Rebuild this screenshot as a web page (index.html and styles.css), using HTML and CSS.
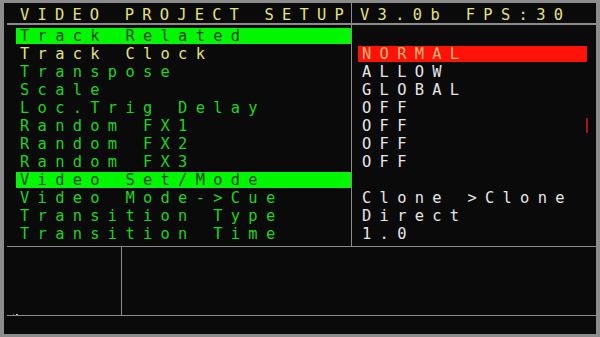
FILE: index.html
```html
<html>
<head>
	<meta charset="utf-8" />
	<title>video project setup</title>
	<link rel="stylesheet" href="styles.css">
</head>

<body>
	<div id="frame">
		<div id="screen">
			<div class="top">
				<div class="pane left">
					<div class="title">VIDEO PROJECT SETUP</div>
					<div class="list">
						<div class="row section">Track Related</div>
						<div class="row current">Track Clock</div>
						<div class="row">Transpose</div>
						<div class="row">Scale</div>
						<div class="row">Loc.Trig Delay</div>
						<div class="row">Random FX1</div>
						<div class="row">Random FX2</div>
						<div class="row">Random FX3</div>
						<div class="row section">Video Set/Mode</div>
						<div class="row">Video Mode-&gt;Cue</div>
						<div class="row">Transition Type</div>
						<div class="row">Transition Time</div>
					</div>
				</div>
				<div class="pane right">
					<div class="title">V3.0b FPS:30</div>
					<div class="list values">
						<div class="row"></div>
						<div class="row selected">NORMAL</div>
						<div class="row">ALLOW</div>
						<div class="row">GLOBAL</div>
						<div class="row">OFF</div>
						<div class="row">OFF<span class="marker"></span></div>
						<div class="row">OFF</div>
						<div class="row">OFF</div>
						<div class="row"></div>
						<div class="row">Clone &gt;Clone</div>
						<div class="row">Direct</div>
						<div class="row">1.0</div>
					</div>
				</div>
			</div>
			<div class="bottom">
				<div class="cell first"><span class="dots"></span></div>
				<div class="cell"></div>
			</div>
		</div>
	</div>
</body>
</html>
```

FILE: styles.css
```css
:root {
	--line-color: #8c8c8c;
	--yellow-color: #e4e47c;
	--green-color: #1fd41f;
	--value-color: #e6e6e6;
}

* {
	box-sizing: border-box;
}

body {
	margin: 0;
	background-color: #8c8c8c;
	font-family: "DejaVu Sans Mono", "Liberation Mono", monospace;
	font-size: 15.4px;
}

#frame {
	width: 600px;
	height: 337px;
	background-color: #8c8c8c;
	padding: 3px 4px 3px 4px;
}

#screen {
	height: 331px;
	background-color: #0a0a0a;
	padding-left: 3px;
}

.top {
	display: grid;
	grid-template-columns: 345px 1fr;
}

.pane.left {
	border-right: 1px solid var(--line-color);
}

.title {
	height: 22px;
	padding-top: 4px;
	line-height: 16px;
	border-bottom: 2px solid var(--line-color);
	color: var(--yellow-color);
	letter-spacing: 8.2px;
	white-space: nowrap;
}

.left .title {
	padding-left: 13px;
}

.right .title {
	padding-left: 8px;
	letter-spacing: 8.35px;
}

.list {
	display: flex;
	flex-direction: column;
	gap: 2px;
	height: 221px;
	padding: 3px 0 4px 9px;
}

.list.values {
	padding-left: 6px;
	padding-right: 9px;
}

.row {
	display: flex;
	height: 16px;
	line-height: 16px;
	padding-left: 4px;
	color: var(--green-color);
	letter-spacing: 8.3px;
	white-space: nowrap;
}

.values .row {
	color: var(--value-color);
}

.row.section {
	background-color: #00f700;
	color: #1c4414;
}

.row.current {
	color: var(--yellow-color);
}

.values .row.selected {
	background-color: #ff1208;
	color: #ffb878;
}

.marker {
	display: block;
	width: 2px;
	height: 15px;
	margin-left: auto;
	margin-right: -1px;
	background-color: #a41810;
}

.bottom {
	display: grid;
	grid-template-columns: 115px 1fr;
	height: 70px;
	border-top: 1px solid var(--line-color);
	border-bottom: 1px solid var(--line-color);
}

.cell.first {
	position: relative;
	border-right: 1px solid var(--line-color);
}

.dots {
	position: absolute;
	left: 6px;
	bottom: 0;
	width: 5px;
	height: 1px;
	background: linear-gradient(to right, #6a6a40 0 1px, transparent 1px 3px, #c8c840 3px 5px);
}
```
